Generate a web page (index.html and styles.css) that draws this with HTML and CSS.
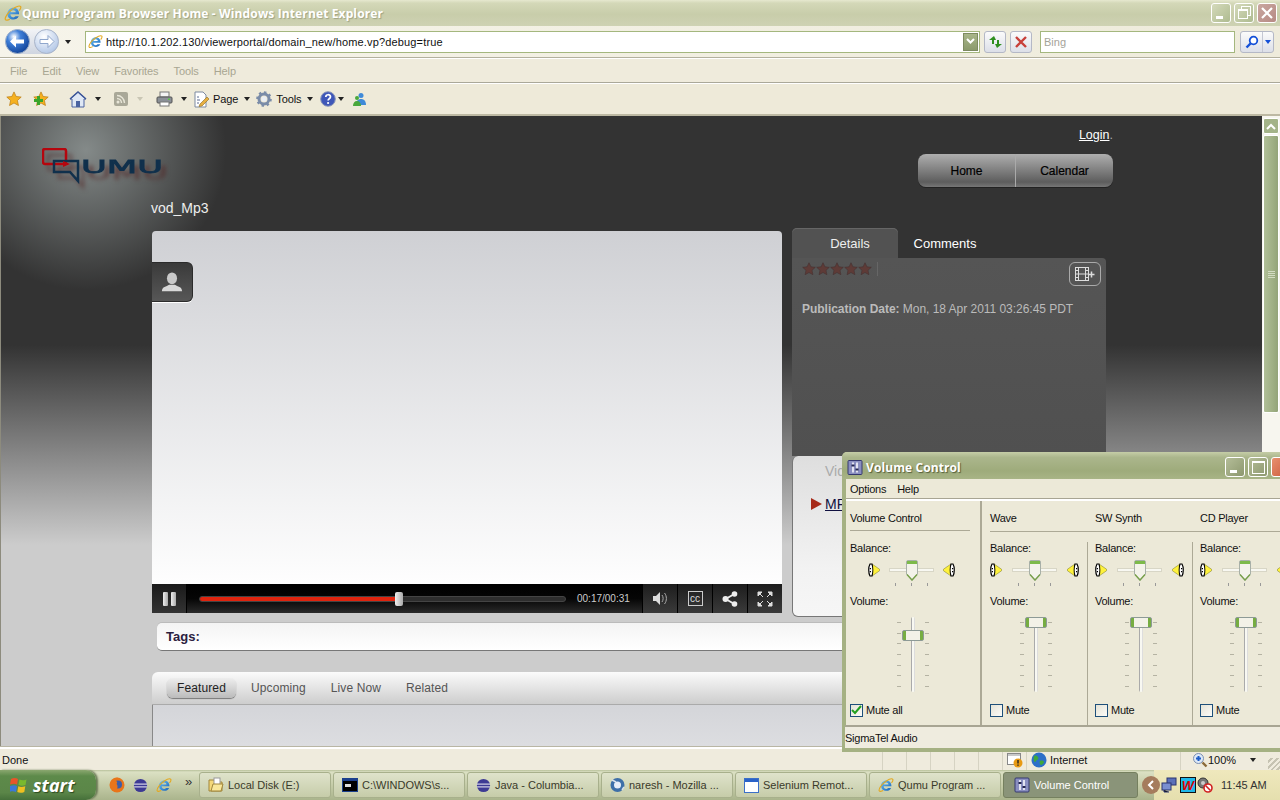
FILE: index.html
```html
<!DOCTYPE html>
<html lang="en">
<head>
    <meta charset="UTF-8">
    <title>Qumu Program Browser Home - Windows Internet Explorer</title>
    <link rel="stylesheet" href="styles.css">
</head>
<body>
    <!-- shared icons -->
    <svg class="icon-defs" width="0" height="0">
        <defs>
            <linearGradient id="ieBlue" x1="0" y1="0" x2="1" y2="1"><stop offset="0" stop-color="#6fc4f5"/><stop offset="1" stop-color="#1560b8"/></linearGradient>
            <radialGradient id="ballBlue" cx=".35" cy=".3" r=".8"><stop offset="0" stop-color="#fff"/><stop offset=".35" stop-color="#3f7fd8"/><stop offset="1" stop-color="#0a3a90"/></radialGradient>
            <radialGradient id="ballPale" cx=".4" cy=".3" r=".8"><stop offset="0" stop-color="#fff"/><stop offset="1" stop-color="#a9c0e4"/></radialGradient>
            <symbol id="ie" viewBox="0 0 16 16">
                <path d="M3 9.2h10.4C13.6 5.6 11.4 3.4 8.3 3.4 5.4 3.4 3 5.8 3 8.8c0 3 2.3 5 5.3 5 2.2 0 3.9-1 4.8-2.9H10c-.5.7-1 1-1.8 1-1.400 0-2.500-1-2.500-2.700zM5.800 7.400C6 6.300 7 5.500 8.200 5.500s2.200.8 2.300 1.900z" fill="url(#ieBlue)"/>
                <path d="M1.200 13.800C.4 12.300 3.800 6.800 8 4.200c3-1.900 6-2.900 6.800-1.900.5.7-.2 2.200-1.300 3.700M1.200 13.800c.5 1 2.300.6 4-.3" fill="none" stroke="#e3a922" stroke-width="1.100"/>
            </symbol>
            <symbol id="mixer" viewBox="0 0 16 16">
                <rect x="1" y="1" width="14" height="14" rx="1" fill="#8a8fc0" stroke="#34386e"/>
                <path d="M6 3v10M10 3v10" stroke="#fff" stroke-width="1.500"/>
                <path d="M4.500 6h3M8.500 10h3" stroke="#232650" stroke-width="2"/>
            </symbol>
            <symbol id="spk-l" viewBox="0 0 12 16">
                <path d="M4 2l7.500 5.200v1.600L4 14z" fill="#fff23c" stroke="#8a8a30" stroke-width=".6"/>
                <path d="M2 2C.3 5 .3 11 2 14h2c1-3 1-9 0-12z" fill="#fff" stroke="#000" stroke-width="1.200"/>
                <path d="M1.800 6h1.200v1.200H1.800zM1.800 9h1.200v1.200H1.800z" fill="#000"/>
            </symbol>
            <symbol id="spk-r" viewBox="0 0 12 16">
                <path d="M8 2L.5 7.200v1.600L8 14z" fill="#fff23c" stroke="#8a8a30" stroke-width=".6"/>
                <path d="M10 2c1.700 3 1.700 9 0 12H8c-1-3-1-9 0-12z" fill="#fff" stroke="#000" stroke-width="1.200"/>
                <path d="M9 6h1.200v1.200H9zM9 9h1.200v1.200H9z" fill="#000"/>
            </symbol>
            <symbol id="bal-thumb" viewBox="0 0 12 21">
                <path d="M.5 2q0-1.500 1.500-1.500h8q1.500 0 1.500 1.500v12L6 20.500.5 14z" fill="#f4f3ea" stroke="#a8b0a8"/>
                <path d="M1 1h10v3H1z" fill="#7dba4a"/>
                <path d="M1 14.500L6 20l5-5.500" fill="none" stroke="#77a04a" stroke-width="1.400"/>
            </symbol>
            <symbol id="eclipse" viewBox="0 0 16 16">
                <circle cx="8" cy="8" r="7" fill="#3d3a94"/>
                <path d="M1 6.500h14M1.200 9.500h13.600" stroke="#fff" stroke-width="1"/>
            </symbol>
            <symbol id="star" viewBox="0 0 14 14">
                <path d="M7 .8l1.900 4 4.400.5-3.300 3 .9 4.400L7 10.500l-3.900 2.200.9-4.400-3.300-3 4.400-.5z"/>
            </symbol>
        </defs>
    </svg>

    <div class="ie-window">
        <header class="titlebar">
            <svg class="title-icon" width="18" height="18"><use href="#ie"/></svg>
            <span class="title-text">Qumu Program Browser Home - Windows Internet Explorer</span>
            <div class="win-buttons">
                <span class="win-btn"><i class="glyph-min"></i></span>
                <span class="win-btn"><i class="glyph-restore"></i></span>
                <span class="win-btn win-close">
                    <svg width="14" height="14" viewBox="0 0 14 14"><path d="M2 2l10 10M12 2L2 12" stroke="#fff" stroke-width="2.200"/></svg>
                </span>
            </div>
        </header>

        <div class="addressbar">
            <div class="nav-balls">
                <svg width="25" height="25" viewBox="0 0 25 25">
                    <circle cx="12.500" cy="12.500" r="12" fill="url(#ballBlue)" stroke="#9fb0c8"/>
                    <path d="M5 12.500l6-6v4h8v4h-8v4z" fill="#fff"/>
                </svg>
                <svg width="25" height="25" viewBox="0 0 25 25">
                    <circle cx="12.500" cy="12.500" r="12" fill="url(#ballPale)" stroke="#a9b4c8"/>
                    <path d="M20 12.500l-6-6v4H6v4h8v4z" fill="#fff" stroke="#8fa6cc"/>
                </svg>
            </div>
            <span class="arrow-down arrow-nav"></span>
            <div class="url-box">
                <svg class="url-icon" width="15" height="15"><use href="#ie"/></svg>
                <span class="url-text">http://10.1.202.130/viewerportal/domain_new/home.vp?debug=true</span>
                <span class="url-drop">
                    <svg width="9" height="7" viewBox="0 0 9 7"><path d="M1 1l3.500 3.500L8 1" fill="none" stroke="#fff" stroke-width="2"/></svg>
                </span>
            </div>
            <span class="tool-btn">
                <svg width="15" height="14" viewBox="0 0 15 14"><path d="M6 1L1 5h3v4h2V5h2zM9 13l5-4h-3V5H9v4H7z" fill="#2f8f1f"/></svg>
            </span>
            <span class="tool-btn">
                <svg width="12" height="12" viewBox="0 0 12 12"><path d="M1 1l10 10M11 1L1 11" stroke="#c8403a" stroke-width="2.400"/></svg>
            </span>
            <div class="search-box">Bing</div>
            <span class="search-go">
                <span class="go-main">
                    <svg width="14" height="14" viewBox="0 0 14 14"><circle cx="8.500" cy="5.500" r="3.800" fill="#fff" stroke="#1450d8" stroke-width="1.800"/><path d="M5.500 8.500L1.500 12.500" stroke="#1450d8" stroke-width="2.400"/></svg>
                </span>
                <span class="go-drop"><span class="arrow-down arrow-blue"></span></span>
            </span>
        </div>

        <nav class="menubar">
            <span>File</span><span>Edit</span><span>View</span><span>Favorites</span><span>Tools</span><span>Help</span>
        </nav>

        <div class="toolbar">
            <svg class="fav-star" width="16" height="16"><use href="#star"/></svg>
            <span class="fav-add">
                <svg class="fav-star" width="16" height="16"><use href="#star"/></svg>
                <svg class="fav-plus" width="9" height="9" viewBox="0 0 9 9"><path d="M3 0h3v3h3v3H6v3H3V6H0V3h3z" fill="#39a52a"/></svg>
            </span>
            <svg class="tb-home" width="18" height="17" viewBox="0 0 18 17"><path d="M9 1L1 8h2v8h12V8h2z" fill="#dfe8f5" stroke="#4a63a0"/><rect x="7" y="10" width="4" height="6" fill="#4a63a0"/><path d="M1 8l8-7 8 7" fill="none" stroke="#3b5598" stroke-width="1.500"/></svg>
            <span class="arrow-down tb-a1"></span>
            <svg class="tb-rss" width="14" height="14" viewBox="0 0 14 14"><rect width="14" height="14" rx="2" fill="#a9a898"/><circle cx="4" cy="10" r="1.500" fill="#e8e6d8"/><path d="M3 6.500a4.500 4.500 0 0 1 4.500 4.500M3 3.500A7.500 7.500 0 0 1 10.500 11" fill="none" stroke="#e8e6d8" stroke-width="1.400"/></svg>
            <span class="arrow-down arrow-off tb-a2"></span>
            <svg class="tb-print" width="17" height="16" viewBox="0 0 17 16"><rect x="4" y="1" width="9" height="5" fill="#f4f4f4" stroke="#777"/><rect x="1" y="6" width="15" height="6" rx="1" fill="#8b9097" stroke="#555"/><rect x="4" y="11" width="9" height="4" fill="#fff" stroke="#777"/><rect x="12" y="7.500" width="2" height="1.500" fill="#5ec04a"/></svg>
            <span class="arrow-down tb-a3"></span>
            <svg class="tb-page" width="16" height="17" viewBox="0 0 16 17"><path d="M1 1h8l3 3v12H1z" fill="#fff" stroke="#7d8aa0"/><path d="M3 6h2M3 9h3M3 12h2" stroke="#5a6a90"/><path d="M6 13l7-7 2 2-7 7-3 .5z" fill="#e8b040" stroke="#8a6a20" stroke-width=".6"/></svg>
            <span class="tb-label tb-page-label">Page</span>
            <span class="arrow-down tb-a4"></span>
            <svg class="tb-gear" width="16" height="16" viewBox="0 0 16 16"><circle cx="8" cy="8" r="5" fill="none" stroke="#7a8ca8" stroke-width="3"/><circle cx="8" cy="8" r="6.800" fill="none" stroke="#7a8ca8" stroke-width="2" stroke-dasharray="2.500 2.800"/><circle cx="8" cy="8" r="2.500" fill="#e9eef5"/></svg>
            <span class="tb-label tb-tools-label">Tools</span>
            <span class="arrow-down tb-a5"></span>
            <svg class="tb-help" width="16" height="16" viewBox="0 0 16 16"><circle cx="8" cy="8" r="7.300" fill="#3f57b8" stroke="#8a96b8"/><path d="M5.800 6c0-3 4.700-3 4.700-.2 0 2-2.400 1.900-2.400 3.700" fill="none" stroke="#fff" stroke-width="1.700"/><circle cx="8.100" cy="12" r="1.100" fill="#fff"/></svg>
            <span class="arrow-down tb-a6"></span>
            <svg class="tb-msn" width="16" height="15" viewBox="0 0 16 15"><circle cx="9" cy="3.500" r="2.500" fill="#3f8ad8"/><path d="M4 13c0-4 2-6 5-6s5 2 5 6z" fill="#3f8ad8"/><circle cx="5" cy="6" r="2" fill="#49a83c"/><path d="M1 14c0-3 1.500-5 4-5s4 2 4 5z" fill="#49a83c"/></svg>
        </div>

        <div class="viewport">
            <div class="page">
                <div class="site-header">
                    <div class="site-brand">
                        <svg class="qumu-logo" width="130" height="40" viewBox="0 0 130 40">
                            <rect x="1" y="1" width="23" height="15" rx="2" fill="none" stroke="#b5060e" stroke-width="2.500"/>
                            <path d="M12 13h24v11h0v9l-8-9H12z" fill="none" stroke="#10304c" stroke-width="2.500"/>
                            <path d="M21 13l7 3-7 3z" fill="#b5060e"/>
                            <text x="39" y="25" class="logo-word" textLength="82" lengthAdjust="spacingAndGlyphs">UMU</text>
                        </svg>
                        <div class="video-title">vod_Mp3</div>
                    </div>
                    <div class="site-links">
                        <div class="login-line"><a class="login">Login</a>.</div>
                        <div class="main-nav">
                            <span class="nav-home">Home</span>
                            <span class="nav-cal">Calendar</span>
                        </div>
                    </div>
                </div>

                <div class="main-grid">
                    <section class="player">
                        <div class="video-area">
                            <div class="presenter-tab">
                                <svg width="22" height="22" viewBox="0 0 24 24"><ellipse cx="12" cy="8" rx="5.500" ry="6.500" fill="#c9c9c9"/><path d="M1 22c0-5 5-5 8-7h6c3 2 8 2 8 7z" fill="#d8d8d8"/></svg>
                            </div>
                        </div>
                        <div class="controls">
                            <div class="ctl-pause"><i></i><i></i></div>
                            <div class="seek">
                                <div class="seek-fill"></div>
                                <div class="seek-thumb"></div>
                            </div>
                            <div class="time">00:17/00:31</div>
                            <div class="ctl-btn">
                                <svg width="17" height="15" viewBox="0 0 17 15"><path d="M1 5h3l4-4v13l-4-4H1z" fill="#ddd"/><path d="M10 4c1.500 2 1.500 5 0 7M12.500 2c2.500 3 2.500 8 0 11" fill="none" stroke="#aaa"/></svg>
                            </div>
                            <div class="ctl-btn">
                                <span class="cc-box">cc</span>
                            </div>
                            <div class="ctl-btn">
                                <svg width="16" height="16" viewBox="0 0 16 16"><circle cx="3.500" cy="8" r="3" fill="#eee"/><circle cx="12.500" cy="3" r="2.800" fill="#eee"/><circle cx="12.500" cy="13" r="2.800" fill="#eee"/><path d="M3.500 8l9-5M3.500 8l9 5" stroke="#eee" stroke-width="2"/></svg>
                            </div>
                            <div class="ctl-btn">
                                <svg width="16" height="16" viewBox="0 0 16 16"><path d="M1 1h4L1 5zM15 1v4l-4-4zM1 15v-4l4 4zM15 15h-4l4-4zM3 3l3 3M13 3l-3 3M3 13l3-3M13 13l-3-3" fill="#ddd" stroke="#ddd"/></svg>
                            </div>
                        </div>
                    </section>

                    <aside class="side">
                        <div class="side-tabs">
                            <span class="side-tab active">Details</span>
                            <span class="side-tab">Comments</span>
                        </div>
                        <div class="details">
                            <div class="details-top">
                                <div class="stars">
                                    <svg width="14" height="14"><use href="#star"/></svg>
                                    <svg width="14" height="14"><use href="#star"/></svg>
                                    <svg width="14" height="14"><use href="#star"/></svg>
                                    <svg width="14" height="14"><use href="#star"/></svg>
                                    <svg width="14" height="14"><use href="#star"/></svg>
                                </div>
                                <span class="add-clip">
                                    <svg width="20" height="14" viewBox="0 0 20 14"><rect x=".5" y=".5" width="13" height="13" fill="none" stroke="#ddd"/><path d="M3.500 .5v13M10.500 .5v13M3.500 7h7M.5 3.500h3M.5 7h3M.5 10.500h3M10.500 3.500h3M10.500 7h3M10.500 10.500h3" stroke="#ddd"/><path d="M17 5v6M14 8h6" stroke="#ddd" stroke-width="1.500" transform="translate(-.5 -.5)"/></svg>
                                </span>
                            </div>
                            <p class="pub-date"><b>Publication Date:</b> Mon, 18 Apr 2011 03:26:45 PDT</p>
                        </div>
                        <div class="renditions">
                            <div class="rend-title">Video</div>
                            <div class="rend-link"><i class="rend-arrow"></i><a>MP3</a></div>
                        </div>
                    </aside>
                </div>

                <div class="tags"><b>Tags:</b></div>

                <section class="browse">
                    <div class="browse-tabs">
                        <span class="browse-tab active">Featured</span>
                        <span class="browse-tab">Upcoming</span>
                        <span class="browse-tab">Live Now</span>
                        <span class="browse-tab">Related</span>
                    </div>
                    <div class="browse-body"></div>
                </section>
            </div>

            <div class="scrollbar">
                <span class="sb-up">
                    <svg width="10" height="7" viewBox="0 0 10 7"><path d="M1 6l4-4 4 4" fill="none" stroke="#fff" stroke-width="2"/></svg>
                </span>
                <span class="sb-thumb"><i></i><i></i><i></i><i></i></span>
            </div>
        </div>

        <footer class="statusbar">
            <span class="status-done">Done</span>
            <span class="status-cell"></span>
            <span class="status-cell"></span>
            <span class="status-cell"></span>
            <span class="status-cell"></span>
            <span class="status-cell"></span>
            <span class="status-popup">
                <svg width="16" height="16" viewBox="0 0 16 16"><rect x=".5" y="1.500" width="13" height="11" fill="#fff" stroke="#888"/><rect x="1" y="2" width="12" height="2" fill="#c8c8c8"/><circle cx="11" cy="11" r="4.500" fill="#e89a14"/><path d="M11 8v3.500M11 12.500v1.200" stroke="#222" stroke-width="1.400"/></svg>
            </span>
            <span class="status-zone">
                <svg width="16" height="16" viewBox="0 0 16 16"><circle cx="8" cy="8" r="7.500" fill="#2d6fc8"/><path d="M3 4c2-1 3 0 4 1s0 3-1 3-1 2-2 2-2-3-1-6zM9 9c2-1 4 0 4 1s-2 3-3 3-2-3-1-4z" fill="#3fa83c"/></svg>
                Internet
            </span>
            <span class="status-zoom">
                <svg width="16" height="16" viewBox="0 0 16 16"><circle cx="6.500" cy="6.500" r="5" fill="#dce8f8" stroke="#7b8fb0"/><path d="M4 6.500h5M6.500 4v5" stroke="#1c5cc8" stroke-width="2"/><path d="M10.500 10.500l4 4" stroke="#8a6a3a" stroke-width="2.400"/></svg>
                100%
                <span class="arrow-down zoom-arrow"></span>
            </span>
            <span class="grip"></span>
        </footer>
    </div>

    <div class="taskbar">
        <div class="start-btn">
            <svg width="19" height="18" viewBox="0 0 19 18"><path d="M1 3c3-1.500 5-1 7 0l-1 5.500C5 7.500 3 7.500 0 8.500z" fill="#e8552a"/><path d="M9.500 3.500c2 1 4 1.200 7 0L15.500 9c-3 1-5 .8-7-.2z" fill="#7ab92e"/><path d="M0 10c3-1 5-1 7 0l-1 6c-2-1-4-1.200-6.800 0z" fill="#3c78d8"/><path d="M8.300 10.300c2 1 4 1 7 0l-1 5.700c-3 1.200-5 1-7 0z" fill="#f0c020"/></svg>
            <span>start</span>
        </div>
        <div class="quick-launch">
            <svg width="16" height="16" viewBox="0 0 16 16"><circle cx="8" cy="8" r="7.500" fill="#e8751a"/><circle cx="9" cy="7.500" r="4" fill="#3c5ea8"/><path d="M1.500 6c1-4 5-6 8-5-2 1-3 2-3 3 2 0 2 2 1 3 2 2 1 6-2 7C3 13 1 10 1.500 6z" fill="#e8751a"/></svg>
            <svg width="15" height="15"><use href="#eclipse"/></svg>
            <svg width="16" height="16"><use href="#ie"/></svg>
            <span class="ql-more">»</span>
        </div>
        <div class="task-list">
            <div class="task">
                <svg width="16" height="16" viewBox="0 0 16 16"><path d="M1 3h5l1 2h7v9H1z" fill="#f4d87a" stroke="#a0853a"/><rect x="6" y="1" width="6" height="8" fill="#fff" stroke="#999"/><path d="M3 14l2-7h10l-2 7z" fill="#f9e79a" stroke="#a0853a"/></svg>
                <span>Local Disk (E:)</span>
            </div>
            <div class="task">
                <svg width="16" height="14" viewBox="0 0 16 14"><rect width="16" height="14" fill="#1b3f8c"/><rect x="1" y="3" width="14" height="10" fill="#000"/><rect x="3" y="6" width="6" height="3" fill="#ddd"/></svg>
                <span>C:\WINDOWS\s...</span>
            </div>
            <div class="task">
                <svg width="15" height="15"><use href="#eclipse"/></svg>
                <span>Java - Columbia...</span>
            </div>
            <div class="task">
                <svg width="15" height="16" viewBox="0 0 15 16"><circle cx="7.500" cy="8" r="7" fill="#3e6fa8"/><circle cx="7.500" cy="8" r="3.500" fill="#e8eef8"/><path d="M2 3l4 2M12 13l2-3" stroke="#d8e0ea" stroke-width="1.500"/></svg>
                <span>naresh - Mozilla ...</span>
            </div>
            <div class="task">
                <svg width="15" height="15" viewBox="0 0 15 15"><rect x=".5" y=".5" width="14" height="14" fill="#fff" stroke="#3b6fc8"/><rect x="1" y="1" width="13" height="3" fill="#2a62c8"/></svg>
                <span>Selenium Remot...</span>
            </div>
            <div class="task">
                <svg width="16" height="16"><use href="#ie"/></svg>
                <span>Qumu Program ...</span>
            </div>
            <div class="task active">
                <svg width="16" height="16"><use href="#mixer"/></svg>
                <span>Volume Control</span>
            </div>
        </div>
        <div class="tray">
            <span class="tray-toggle">
                <svg width="8" height="10" viewBox="0 0 8 10"><path d="M6 1L2 5l4 4" fill="none" stroke="#fff" stroke-width="2"/></svg>
            </span>
            <svg width="16" height="16" viewBox="0 0 16 16"><rect x="6" y="1" width="9" height="7" fill="#5a6fb8" stroke="#2b3570"/><rect x="1" y="6" width="9" height="7" fill="#7a8fd0" stroke="#2b3570"/><path d="M3 13v2h5" stroke="#2b3570"/></svg>
            <span class="tray-w">W</span>
            <svg width="16" height="16" viewBox="0 0 16 16"><circle cx="6" cy="6" r="5" fill="#777" stroke="#333"/><circle cx="6" cy="6" r="2" fill="#ccc"/><circle cx="11" cy="11" r="4" fill="#fff" stroke="#d02020" stroke-width="1.600"/><path d="M8.500 8.500l5 5" stroke="#d02020" stroke-width="1.600"/></svg>
            <span class="clock">11:45 AM</span>
        </div>
    </div>

    <!-- Volume Control window, floats over the browser -->
    <div class="vol-window">
        <div class="vol-title">
            <svg width="16" height="17"><use href="#mixer"/></svg>
            <span class="vol-title-text">Volume Control</span>
            <div class="vol-buttons">
                <span class="win-btn vol-btn"><i class="glyph-min"></i></span>
                <span class="win-btn vol-btn"><i class="glyph-max"></i></span>
                <span class="win-btn vol-btn vol-close"></span>
            </div>
        </div>
        <div class="vol-inner">
            <div class="vol-menu"><span>Options</span><span>Help</span></div>
            <div class="mixer">
                <div class="master">
                    <div class="line-head master-head">Volume Control</div>
                    <div class="line-body">
                        <div class="lbl">Balance:</div>
                        <div class="balance master-balance">
                            <svg width="12" height="16"><use href="#spk-l"/></svg>
                            <div class="bal-track"><svg class="bal-thumb" width="12" height="21"><use href="#bal-thumb"/></svg></div>
                            <svg width="12" height="16"><use href="#spk-r"/></svg>
                        </div>
                        <div class="lbl lbl-volume">Volume:</div>
                        <div class="fader master-fader"><i class="fader-thumb thumb-low"></i></div>
                        <label class="mute"><span class="check on">
                            <svg width="11" height="10" viewBox="0 0 11 10"><path d="M1 5l3 3 6-7" fill="none" stroke="#22a020" stroke-width="2"/></svg>
                        </span>Mute all</label>
                    </div>
                </div>
                <div class="lines">
                    <div class="line-heads">
                        <span class="line-head">Wave</span>
                        <span class="line-head">SW Synth</span>
                        <span class="line-head">CD Player</span>
                    </div>
                    <div class="line-cols">
                        <div class="line-body">
                            <div class="lbl">Balance:</div>
                            <div class="balance">
                                <svg width="12" height="16"><use href="#spk-l"/></svg>
                                <div class="bal-track"><svg class="bal-thumb" width="12" height="21"><use href="#bal-thumb"/></svg></div>
                                <svg width="12" height="16"><use href="#spk-r"/></svg>
                            </div>
                            <div class="lbl lbl-volume">Volume:</div>
                            <div class="fader"><i class="fader-thumb"></i></div>
                            <label class="mute"><span class="check"></span>Mute</label>
                        </div>
                        <div class="line-body">
                            <div class="lbl">Balance:</div>
                            <div class="balance">
                                <svg width="12" height="16"><use href="#spk-l"/></svg>
                                <div class="bal-track"><svg class="bal-thumb" width="12" height="21"><use href="#bal-thumb"/></svg></div>
                                <svg width="12" height="16"><use href="#spk-r"/></svg>
                            </div>
                            <div class="lbl lbl-volume">Volume:</div>
                            <div class="fader"><i class="fader-thumb"></i></div>
                            <label class="mute"><span class="check"></span>Mute</label>
                        </div>
                        <div class="line-body">
                            <div class="lbl">Balance:</div>
                            <div class="balance">
                                <svg width="12" height="16"><use href="#spk-l"/></svg>
                                <div class="bal-track"><svg class="bal-thumb" width="12" height="21"><use href="#bal-thumb"/></svg></div>
                                <svg width="12" height="16"><use href="#spk-r"/></svg>
                            </div>
                            <div class="lbl lbl-volume">Volume:</div>
                            <div class="fader"><i class="fader-thumb"></i></div>
                            <label class="mute"><span class="check"></span>Mute</label>
                        </div>
                    </div>
                </div>
            </div>
            <div class="vol-status">SigmaTel Audio</div>
        </div>
    </div>
</body>
</html>
```

FILE: styles.css
```css
html, body {
    margin: 0;
    height: 800px;
    overflow: hidden;
}

body {
    position: relative;
    width: 1280px;
    font-family: "Liberation Sans", Arial, sans-serif;
    font-size: 11px;
    color: #111;
    background-color: #ece9d8;
}

svg {
    display: block;
    flex: none;
}

.icon-defs {
    position: absolute;
}

.arrow-down {
    display: block;
    flex: none;
    width: 0;
    height: 0;
    border-left: 3.5px solid transparent;
    border-right: 3.5px solid transparent;
    border-top: 4px solid #222;
}

.arrow-off {
    border-top-color: #c9c6b4;
}

.arrow-blue {
    border-top-color: #1450d8;
}

/* browser window */
.ie-window {
    height: 770px;
    display: flex;
    flex-direction: column;
}

.titlebar {
    height: 26px;
    display: flex;
    align-items: center;
    padding: 0 3px 0 4px;
    background: linear-gradient(#e6e8cf 0, #d4d8b8 12%, #c8cdaa 55%, #ced2b3 100%);
}

.title-text {
    font-family: "Open Sans", sans-serif;
    font-size: 12px;
    font-weight: 700;
    letter-spacing: .13px;
    color: #fff;
    text-shadow: 1px 1px 1px #9ea383;
}

.win-buttons {
    margin-left: auto;
    display: flex;
    gap: 3px;
}

.win-btn {
    width: 18px;
    height: 18px;
    display: flex;
    align-items: center;
    justify-content: center;
    position: relative;
    border: 1px solid #fff;
    border-radius: 3px;
    background: linear-gradient(135deg, #d5dabb, #aebb90);
}

.win-close {
    background: linear-gradient(135deg, #c9a7a0, #b78a84);
}

.glyph-min {
    position: absolute;
    left: 4px;
    bottom: 3px;
    width: 7px;
    height: 3px;
    background: #fff;
}

.glyph-restore {
    width: 8px;
    height: 7px;
    margin: 2px 2px 0 0;
    border: 1px solid #fff;
    border-top-width: 2px;
    box-shadow: 3px -3px 0 -1px #c3cba8, 3px -3px 0 0 #fff;
}

.glyph-max {
    width: 11px;
    height: 10px;
    border: 1px solid #fff;
    border-top-width: 2px;
}

.addressbar {
    height: 32px;
    display: flex;
    align-items: center;
    padding-left: 5px;
    background: linear-gradient(90deg, #f6f4ea, #eeebdb);
    border-bottom: 1px solid #b3b09e;
    box-sizing: border-box;
}

.nav-balls {
    display: flex;
    gap: 4px;
    border-radius: 13px;
    background: linear-gradient(#f2f3f6, #cfd5e0);
}

.arrow-nav {
    margin: 0 14px 0 6px;
}

.url-box {
    width: 895px;
    height: 22px;
    box-sizing: border-box;
    display: flex;
    align-items: center;
    border: 1px solid #a4b77e;
    background: #fff;
    padding-left: 2px;
}

.url-text {
    margin-left: 3px;
    font-size: 11px;
    letter-spacing: .16px;
}

.url-drop {
    margin-left: auto;
    margin-right: 1px;
    width: 15px;
    height: 18px;
    display: flex;
    align-items: center;
    justify-content: center;
    background: linear-gradient(#a9b68a, #8b9a6c);
    border: 1px solid #7d8a60;
    box-sizing: border-box;
}

.tool-btn {
    width: 22px;
    height: 22px;
    box-sizing: border-box;
    margin-left: 4px;
    display: flex;
    align-items: center;
    justify-content: center;
    border: 1px solid #b4b8c6;
    border-radius: 3px;
    background: linear-gradient(#fbfbfb, #dcdfe8);
}

.search-box {
    width: 195px;
    height: 22px;
    margin-left: 8px;
    box-sizing: border-box;
    border: 1px solid #a4b77e;
    background: #fff;
    color: #a5a399;
    padding: 4px 3px;
}

.search-go {
    margin-left: 5px;
    width: 34px;
    height: 22px;
    display: flex;
    box-sizing: border-box;
    border: 1px solid #b4b8c6;
    border-radius: 3px;
    background: linear-gradient(#fbfbfb, #dcdfe8);
}

.go-main {
    width: 21px;
    display: flex;
    align-items: center;
    justify-content: center;
    border-right: 1px solid #c4c7d2;
}

.go-drop {
    flex: 1;
    display: flex;
    align-items: center;
    justify-content: center;
}

.menubar {
    height: 25px;
    box-sizing: border-box;
    display: flex;
    align-items: center;
    gap: 15px;
    padding-left: 10px;
    letter-spacing: -.1px;
    color: #a8a692;
    background: #efebdc;
    border-top: 1px solid #fff;
    border-bottom: 1px solid #aaa899;
}

.toolbar {
    height: 33px;
    box-sizing: border-box;
    display: flex;
    align-items: center;
    padding-left: 6px;
    background: #eeead9;
    border-top: 1px solid #fff;
    border-bottom: 2px solid #bdb9a3;
}

.fav-star {
    fill: #f5b120;
    stroke: #b97a10;
    stroke-width: .6;
}

.fav-add {
    position: relative;
    margin-left: 11px;
}

.fav-plus {
    position: absolute;
    left: 1px;
    top: 5px;
}

.tb-home { margin-left: 20px; }
.tb-a1 { margin-left: 8px; }
.tb-rss { margin-left: 13px; }
.tb-a2 { margin-left: 9px; }
.tb-print { margin-left: 13px; }
.tb-a3 { margin-left: 8px; }
.tb-page { margin-left: 7px; }
.tb-page-label { margin-left: 3px; letter-spacing: -.1px; }
.tb-a4 { margin-left: 6px; }
.tb-gear { margin-left: 6px; }
.tb-tools-label { margin-left: 4px; letter-spacing: -.1px; }
.tb-a5 { margin-left: 6px; }
.tb-help { margin-left: 7px; }
.tb-a6 { margin-left: 2px; }
.tb-msn { margin-left: 8px; }

/* page inside the browser */
.viewport {
    height: 630px;
    display: flex;
    overflow: hidden;
}

.page {
    flex: 1;
    min-width: 0;
    overflow: hidden;
    border-left: 1px solid #8d8b7d;
    background:
        radial-gradient(circle 140px at 85px 34px, #848a89, rgba(51, 51, 51, 0)),
        linear-gradient(#333 229px, #ccc 429px);
}

.scrollbar {
    width: 18px;
    flex: none;
    background: #f7f6ef;
    display: flex;
    flex-direction: column;
    align-items: center;
    padding-top: 2px;
    box-sizing: border-box;
}

.sb-up {
    width: 14px;
    height: 14px;
    display: flex;
    align-items: center;
    justify-content: center;
    border: 1px solid #fff;
    border-radius: 2px;
    background: #a3b388;
}

.sb-thumb {
    width: 14px;
    height: 276px;
    margin-top: 1px;
    display: flex;
    flex-direction: column;
    align-items: center;
    justify-content: center;
    gap: 1px;
    border: 1px solid #fff;
    border-radius: 2px;
    background: linear-gradient(90deg, #b0bf97, #a0b085 60%, #93a478);
}

.sb-thumb i {
    display: block;
    width: 7px;
    height: 1px;
    background: #d3dcc2;
}

.site-header {
    height: 115px;
    box-sizing: border-box;
    display: flex;
    justify-content: space-between;
    padding: 12px 149px 0 41px;
}

.site-brand {
    padding-top: 20px;
}

.qumu-logo {
    filter: drop-shadow(5px 6px 2px rgba(80, 35, 35, .55));
}

.logo-word {
    font-family: "DejaVu Sans", sans-serif;
    font-size: 18px;
    stroke: #10304c;
    stroke-width: .8;
    fill: #10304c;
}

.video-title {
    margin: 12px 0 0 109px;
    font-size: 14px;
    color: #eee;
}

.site-links {
    display: flex;
    flex-direction: column;
    align-items: flex-end;
}

.login-line {
    font-size: 12.5px;
    color: #aaa;
    line-height: 14px;
}

.login {
    color: #fff;
    text-decoration: underline;
}

.main-nav {
    margin-top: 12px;
    width: 195px;
    height: 33px;
    box-sizing: border-box;
    display: flex;
    border-radius: 8px;
    font-size: 12px;
    color: #000;
    -webkit-text-stroke: .2px #000;
    background: linear-gradient(#aeaeae, #7a7a7a 55%, #5d5d5d 85%, #777);
    box-shadow: 0 1px 0 #222;
}

.main-nav span {
    display: flex;
    align-items: center;
    justify-content: center;
}

.nav-home {
    width: 97px;
    border-right: 1px solid #aaa;
}

.nav-cal {
    flex: 1;
}

.main-grid {
    margin-left: 151px;
    display: grid;
    grid-template-columns: 630px 314px;
    column-gap: 10px;
    margin-top: -3px;
    align-items: start;
}

.player {
    margin-top: 3px;
    display: flex;
    flex-direction: column;
    height: 382px;
}

.video-area {
    flex: 1;
    position: relative;
    border-radius: 4px 4px 0 0;
    background: linear-gradient(#cfd0d4, #fefefe);
}

.presenter-tab {
    position: absolute;
    left: 0;
    top: 31px;
    width: 41px;
    height: 40px;
    box-sizing: border-box;
    display: flex;
    align-items: center;
    justify-content: center;
    border: 1px solid #2b2b2b;
    border-left: 0;
    border-radius: 0 6px 6px 0;
    background: linear-gradient(#3a3a3a, #575757);
    box-shadow: 0 1px 0 #fff;
}

.controls {
    height: 29px;
    display: flex;
    align-items: center;
    background: linear-gradient(#000 0, #050505 50%, #2a2a2a 100%);
}

.ctl-pause {
    width: 34px;
    height: 100%;
    flex: none;
    display: flex;
    align-items: center;
    justify-content: center;
    gap: 3px;
    border-right: 1px solid #000;
    background: linear-gradient(#1a1a1a, #333);
}

.ctl-pause i {
    display: block;
    width: 5px;
    height: 14px;
    border-radius: 1px;
    background: linear-gradient(90deg, #eee, #aaa);
}

.seek {
    position: relative;
    flex: none;
    width: 367px;
    height: 6px;
    margin-left: 12px;
    border-radius: 3px;
    background: #2e2e2e;
    border: 1px solid #444;
    box-sizing: border-box;
}

.seek-fill {
    height: 100%;
    width: 200px;
    border-radius: 3px;
    background: #e0240e;
}

.seek-thumb {
    position: absolute;
    left: 195px;
    top: -5px;
    width: 8px;
    height: 14px;
    border-radius: 2px;
    background: linear-gradient(90deg, #eee, #aaa);
}

.time {
    width: 76px;
    flex: none;
    box-sizing: border-box;
    padding-left: 11px;
    font-size: 10px;
    color: #ccc;
}

.ctl-btn {
    width: 35px;
    height: 100%;
    display: flex;
    align-items: center;
    justify-content: center;
    border-left: 1px solid #000;
    background: linear-gradient(#1d1d1d, #3a3a3a);
    box-sizing: border-box;
}

.cc-box {
    width: 15px;
    height: 15px;
    box-sizing: border-box;
    display: flex;
    align-items: center;
    justify-content: center;
    border: 1px solid #ccc;
    font-size: 10px;
    line-height: 1;
    color: #ddd;
}

.side-tabs {
    height: 30px;
    display: flex;
}

.side-tab {
    width: 94px;
    display: flex;
    align-items: center;
    justify-content: center;
    font-size: 13px;
    padding-top: 1px;
    color: #fff;
}

.side-tab.active {
    width: 106px;
    box-sizing: border-box;
    padding-left: 10px;
    background: #525252;
    border-radius: 5px 5px 0 0;
    box-shadow: inset 0 1px 0 #666;
    color: #eee;
}

.details {
    height: 198px;
    box-sizing: border-box;
    padding: 4px 5px 0 10px;
    border-radius: 0 4px 0 0;
    background: linear-gradient(#555, #505050);
}

.details-top {
    display: flex;
    justify-content: space-between;
    align-items: flex-start;
}

.stars {
    display: flex;
    fill: #5e3b37;
    stroke: #453030;
    stroke-width: .6;
    padding-right: 5px;
    border-right: 1px solid #666;
}

.add-clip {
    width: 32px;
    height: 24px;
    box-sizing: border-box;
    display: flex;
    align-items: center;
    justify-content: center;
    border: 1px solid #aaa;
    border-radius: 6px;
}

.pub-date {
    margin: 16px 0 0;
    font-size: 12px;
    letter-spacing: -.03px;
    color: #bbb;
}

.renditions {
    height: 161px;
    box-sizing: border-box;
    border-radius: 6px;
    border: 1px solid #777;
    border-top: 0;
    background: linear-gradient(#dedede, #f2f2f2 70%, #f6f6f6);
    padding: 7px 0 0 32px;
}

.rend-title {
    font-size: 14px;
    color: #aaa;
}

.rend-link {
    position: relative;
    margin-top: 17px;
    font-size: 14px;
    color: #101040;
    text-decoration: underline;
}

.rend-arrow {
    position: absolute;
    left: -14px;
    top: 2px;
    width: 0;
    height: 0;
    border-left: 11px solid #a72a18;
    border-top: 6px solid transparent;
    border-bottom: 6px solid transparent;
}

.tags {
    margin: 6px 0 0 156px;
    width: 949px;
    height: 28px;
    box-sizing: border-box;
    padding: 6px 9px;
    font-size: 13px;
    color: #2b2040;
    border-radius: 5px;
    background: linear-gradient(#f4f4f4, #fff);
    border-bottom: 1px solid #777;
    box-shadow: 0 -1px 0 #bbb;
}

.browse {
    margin: 21px 0 0 151px;
    width: 954px;
}

.browse-tabs {
    height: 33px;
    box-sizing: border-box;
    display: flex;
    align-items: center;
    gap: 25px;
    padding-left: 15px;
    border-radius: 6px 6px 0 0;
    border-bottom: 1px solid #aaa;
    background: linear-gradient(#fbfbfb, #cdcdcd);
}

.browse-tab {
    font-size: 12px;
    letter-spacing: .1px;
    color: #555;
}

.browse-tab.active {
    margin-right: -10px;
    width: 69px;
    height: 20px;
    display: flex;
    align-items: center;
    justify-content: center;
    color: #222;
    border-radius: 6px;
    background: linear-gradient(#eee, #bbb);
    box-shadow: 0 1px 1px #777;
}

.browse-body {
    height: 60px;
    background: linear-gradient(#d4d5d9, #e0e1e4);
    border-left: 1px solid #888;
}

/* status bar */
.statusbar {
    height: 24px;
    display: flex;
    align-items: center;
    box-sizing: border-box;
    padding-top: 3px;
    background: #efebdd;
    border-top: 1px solid #b9b6a4;
    box-shadow: inset 0 2px 0 #fff;
}

.status-done {
    width: 882px;
    padding-left: 2px;
    flex: none;
    box-sizing: border-box;
}

.status-cell {
    width: 24px;
    height: 100%;
    flex: none;
    box-sizing: border-box;
    border-left: 1px solid #d6d3c3;
}

.status-popup {
    width: 24px;
    height: 100%;
    flex: none;
    box-sizing: border-box;
    display: flex;
    align-items: center;
    justify-content: center;
    border-left: 1px solid #d6d3c3;
}

.status-zone {
    width: 154px;
    flex: none;
    display: flex;
    align-items: center;
    gap: 3px;
    padding-left: 4px;
    box-sizing: border-box;
    border-left: 1px solid #d6d3c3;
    height: 100%;
}

.status-zoom {
    display: flex;
    align-items: center;
    padding-left: 11px;
    height: 100%;
    border-left: 1px solid #d6d3c3;
}

.zoom-arrow {
    margin-left: 14px;
}

.grip {
    width: 12px;
    height: 12px;
    margin-left: auto;
    align-self: flex-end;
    background: repeating-linear-gradient(135deg, transparent 0 2px, #c6c3b2 2px 4px);
}

/* task bar */
.taskbar {
    height: 30px;
    display: flex;
    align-items: center;
    background: linear-gradient(#b8c19a 0, #dbe0c3 2px, #c5cca8 50%, #aab48c 100%);
}

.start-btn {
    width: 96px;
    height: 100%;
    flex: none;
    box-sizing: border-box;
    display: flex;
    align-items: center;
    gap: 4px;
    padding-left: 10px;
    border-radius: 0 10px 10px 0;
    background: linear-gradient(#8aa76f, #5d8a4a 20%, #5b8648 75%, #46703a);
    box-shadow: 2px 0 2px #6a7a55;
}

.start-btn span {
    font-family: "Open Sans", sans-serif;
    font-size: 18px;
    font-weight: 700;
    font-style: italic;
    color: #fff;
    text-shadow: 1px 1px 1px #2c4a20;
}

.quick-launch {
    width: 103px;
    flex: none;
    display: flex;
    align-items: center;
    gap: 8px;
    padding-left: 13px;
    box-sizing: border-box;
}

.ql-more {
    font-size: 13px;
    margin: -8px 0 0 5px;
    color: #333;
}

.task-list {
    flex: none;
    display: flex;
    gap: 2px;
    width: 942px;
}

.task {
    width: 132px;
    height: 26px;
    flex: none;
    box-sizing: border-box;
    display: flex;
    align-items: center;
    gap: 4px;
    padding-left: 8px;
    border-radius: 3px;
    border: 1px solid #a8b08c;
    font-size: 11px;
    color: #3a3a2a;
    background: linear-gradient(#dfe3cb, #c6cca9);
}

.task.active {
    width: 135px;
    padding-left: 10px;
    color: #fff;
    background: #8a9479;
    border-color: #75805f;
}

.tray {
    margin-left: 13px;
    flex: 1;
    height: 100%;
    display: flex;
    align-items: center;
    gap: 1px;
    min-width: 0;
    background: linear-gradient(#efe8bd, #e5dfae);
}

.tray-toggle {
    margin-left: -12px;
    width: 18px;
    height: 18px;
    border-radius: 50%;
    display: flex;
    align-items: center;
    justify-content: center;
    background: #a57c5d;
}

.tray-w {
    width: 16px;
    height: 16px;
    flex: none;
    box-sizing: border-box;
    display: flex;
    align-items: center;
    justify-content: center;
    border: 1px solid #111;
    background: #1fb7e8;
    color: #d00;
    font-weight: 700;
    font-style: italic;
    font-size: 13px;
    margin-left: 2px;
}

.clock {
    margin-left: 7px;
    color: #333;
    white-space: nowrap;
}

/* volume control window, a desktop window so it sits on its own spot */
.vol-window {
    position: absolute;
    left: 842px;
    top: 452px;
    width: 470px;
    height: 300px;
    box-sizing: border-box;
    display: flex;
    flex-direction: column;
    border: 4px solid #a5b183;
    border-top: 0;
    border-radius: 5px 5px 0 0;
    background: #ece9d8;
}

.vol-title {
    height: 27px;
    flex: none;
    box-sizing: border-box;
    display: flex;
    align-items: center;
    margin: 0 -4px;
    padding: 3px 0 0 5px;
    border-radius: 5px 5px 0 0;
    background: linear-gradient(#c5cda7 0, #abb68c 20%, #9eab7b 70%, #a8b486 100%);
}

.vol-title-text {
    margin-left: 3px;
    font-family: "Open Sans", sans-serif;
    font-size: 12px;
    font-weight: 700;
    letter-spacing: .1px;
    color: #fff;
    text-shadow: 1px 1px 1px #555f3a;
}

.vol-buttons {
    position: absolute;
    left: 379px;
    top: 5px;
    display: flex;
    gap: 3px;
}

.vol-btn {
    background: linear-gradient(135deg, #b4bd98, #8d986f);
}

.vol-close {
    background: linear-gradient(135deg, #e8916f, #cc5a3c);
}

.vol-inner {
    flex: 1;
    display: flex;
    flex-direction: column;
    min-height: 0;
    letter-spacing: -.25px;
}

.vol-menu {
    height: 22px;
    flex: none;
    box-sizing: border-box;
    display: flex;
    align-items: center;
    gap: 11px;
    padding-left: 4px;
    border-bottom: 2px solid #fff;
    box-shadow: inset 0 -1px 0 #a8a593;
}

.mixer {
    flex: 1;
    display: flex;
    min-height: 0;
}

.master {
    width: 136px;
    flex: none;
    box-sizing: border-box;
    padding: 0 0 0 4px;
    border-right: 2px solid #aca996;
}

.line-head {
    display: block;
    box-sizing: border-box;
    height: 30px;
    padding-top: 11px;
}

.master-head {
    width: 120px;
    border-bottom: 1px solid #aca996;
}

.lines {
    flex: 1;
    min-width: 0;
}

.line-heads {
    display: flex;
    margin-left: 8px;
    border-bottom: 1px solid #aca996;
}

.line-heads .line-head {
    width: 105px;
}

.line-cols {
    display: flex;
    margin: 10px 0 0 1px;
    height: 185px;
}

.line-cols .line-body {
    width: 105px;
    flex: none;
    box-sizing: border-box;
    padding-left: 7px;
    border-right: 1px solid #aca996;
}

.master .line-body {
    padding-top: 11px;
}

.lbl {
    height: 13px;
    line-height: 13px;
}

.lbl-volume {
    margin-top: 13px;
}

.balance {
    height: 24px;
    margin-top: 3px;
    display: flex;
    align-items: center;
    gap: 11px;
}

.master-balance {
    margin-left: 18px;
    gap: 10px;
}

.bal-track {
    position: relative;
    width: 43px;
    height: 2px;
    background: #f8f8f2;
    box-shadow: 0 0 0 1px #d8d6c6;
}

/* ticks under the balance slider */
.bal-track::after {
    content: "";
    position: absolute;
    left: 5px;
    right: 5px;
    top: 14px;
    height: 3px;
    background:
        linear-gradient(#999, #999) 0 0 / 1px 3px no-repeat,
        linear-gradient(#999, #999) 50% 0 / 1px 3px no-repeat,
        linear-gradient(#999, #999) 100% 0 / 1px 3px no-repeat;
}

.bal-thumb {
    position: absolute;
    left: 16px;
    top: -9px;
}

.fader {
    position: relative;
    width: 4px;
    height: 75px;
    margin: 9px 0 0 44px;
    border-radius: 2px;
    background: linear-gradient(90deg, #aaa 0 1px, #f8f8f2 1px 3px, #ddd 3px);
}

.master-fader {
    margin-left: 61px;
}

/* tick marks either side of the fader */
.fader::before,
.fader::after {
    content: "";
    position: absolute;
    top: 5px;
    width: 4px;
    height: 65px;
    background: repeating-linear-gradient(#b5b3a3 0 1px, transparent 1px 10.66px);
}

.fader::before {
    left: -14px;
}

.fader::after {
    left: 14px;
}

.fader-thumb {
    position: absolute;
    z-index: 1;
    left: -9px;
    top: 0;
    width: 22px;
    height: 11px;
    box-sizing: border-box;
    border: 1px solid #8d9a96;
    border-radius: 2px;
    background: linear-gradient(90deg, #76ad42 0 3px, #f3f2e8 3px calc(100% - 3px), #76ad42 calc(100% - 3px));
}

.thumb-low {
    top: 13px;
}

.mute {
    display: flex;
    align-items: center;
    gap: 3px;
    margin-top: 11px;
    height: 14px;
}

.check {
    width: 13px;
    height: 13px;
    box-sizing: border-box;
    display: flex;
    align-items: center;
    justify-content: center;
    border: 1px solid #1d4f7a;
    background: linear-gradient(135deg, #e5e3d6, #fbfbf8);
}

.vol-status {
    height: 23px;
    flex: none;
    box-sizing: border-box;
    padding-top: 5px;
    margin-left: -1px;
    border-top: 2px solid #a8a593;
    background: #efecdf;
}
```
